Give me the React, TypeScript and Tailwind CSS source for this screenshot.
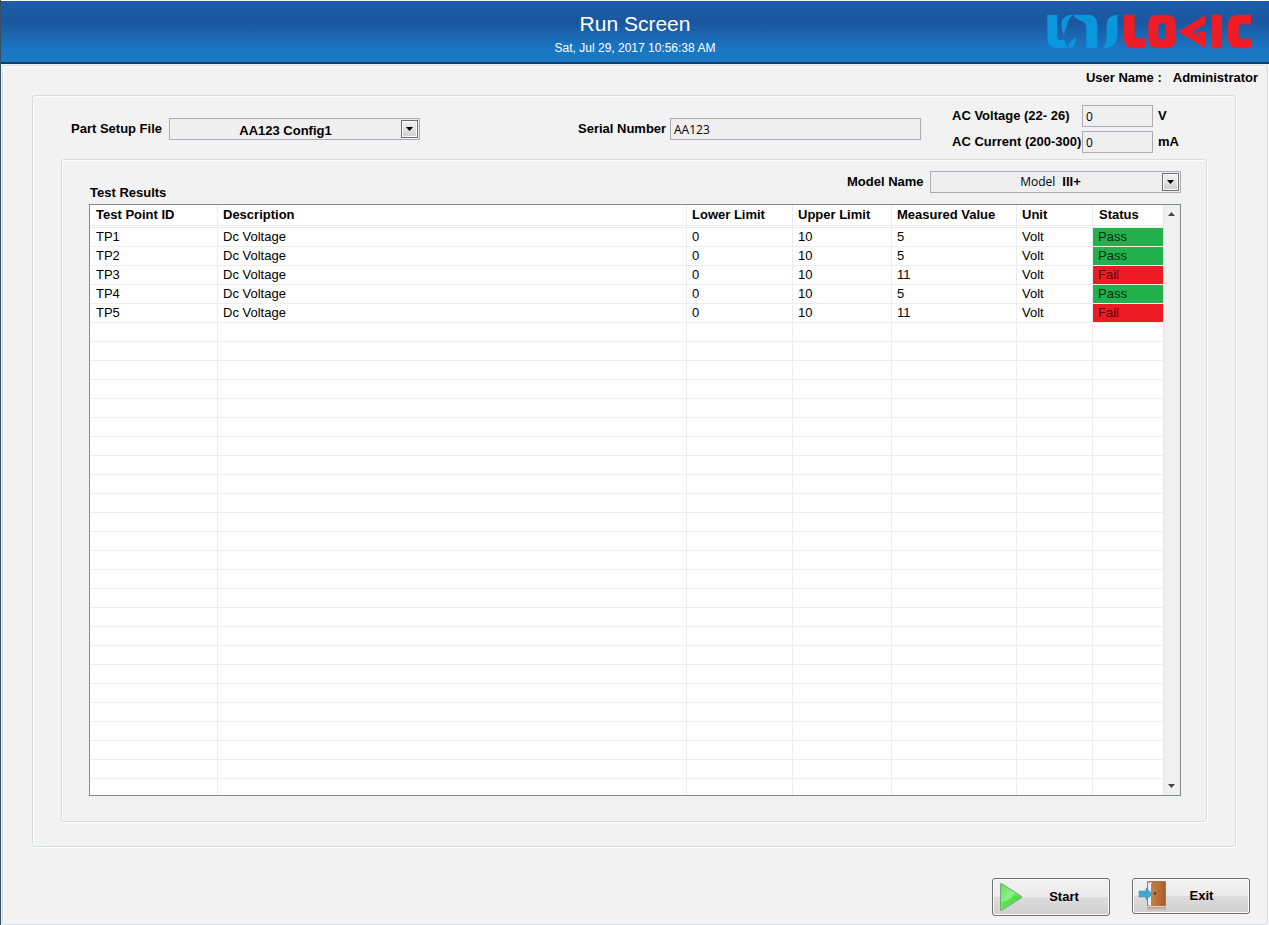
import { useState } from 'react'
import type { ReactNode } from 'react'

type TestResult = {
  id: string
  description: string
  lower: string
  upper: string
  measured: string
  unit: string
  status: 'Pass' | 'Fail'
}

const results: TestResult[] = [
  { id: 'TP1', description: 'Dc Voltage', lower: '0', upper: '10', measured: '5', unit: 'Volt', status: 'Pass' },
  { id: 'TP2', description: 'Dc Voltage', lower: '0', upper: '10', measured: '5', unit: 'Volt', status: 'Pass' },
  { id: 'TP3', description: 'Dc Voltage', lower: '0', upper: '10', measured: '11', unit: 'Volt', status: 'Fail' },
  { id: 'TP4', description: 'Dc Voltage', lower: '0', upper: '10', measured: '5', unit: 'Volt', status: 'Pass' },
  { id: 'TP5', description: 'Dc Voltage', lower: '0', upper: '10', measured: '11', unit: 'Volt', status: 'Fail' },
]

const columns = [
  { title: 'Test Point ID', width: 'w-[128px]' },
  { title: 'Description', width: '' },
  { title: 'Lower Limit', width: 'w-[106px]' },
  { title: 'Upper Limit', width: 'w-[99px]' },
  { title: 'Measured Value', width: 'w-[125px]' },
  { title: 'Unit', width: 'w-[76px]' },
  { title: 'Status', width: 'w-[70px]' },
]

const ROW_COUNT = 30

const etched = 'rounded-[3px] border border-[#d3dee3] shadow-[inset_1px_1px_0_#fff,1px_1px_0_#fff]'
const field = 'h-[22px] border border-[#abadb3] bg-[#efefef]'
const fieldText = "px-[3px] font-['Open_Sans',sans-serif] text-xs"

const Logo = () => (
  <svg viewBox="0 0 618 105" className="h-[35px] w-[206px]" role="img" aria-label="Unilogic">
    <g fill="#0a96dc" transform="translate(-18 -20)">
      <path d="M22 22H52V88Q52 98 62 98H74Q76 114 84 123H52Q22 123 22 94Z" />
      <path d="M66 38Q76 22 98 23Q84 36 82 52Q76 66 72 84Q60 60 66 38Z" />
      <path d="M82 118Q88 102 108 90Q108 110 98 119Q90 124 82 118Z" />
      <path d="M100 22H142Q172 22 172 55V123H139V64Q138 42 122 40Q108 36 100 22Z" />
      <path d="M232 22Q200 24 200 54V84Q200 112 188 123Q232 122 232 82Z" />
    </g>
    <g fill="#ee1c25" transform="translate(-18 -20)">
      <path d="M252 22H284V84Q284 93 294 93H317V123H284Q252 123 252 92Z" />
    </g>
    <g fill="#ee1c25" transform="translate(297 -20)">
      <path
        fillRule="evenodd"
        d="M38 22H64Q92 22 92 50V95Q92 123 64 123H38Q10 123 10 95V50Q10 22 38 22ZM50 48Q40 48 40 58V87Q40 97 50 97H52Q62 97 62 87V58Q62 48 52 48Z"
      />
      <path d="M100 73L181 22V51L142 73L163 87V80H155V73H181V123Z" />
      <path d="M200 22H231V123H200Z" />
      <path d="M318 22H280Q249 22 249 55V90Q249 123 280 123H318V94H292Q281 94 281 84V62Q281 51 292 51H318Z" />
    </g>
  </svg>
)

const PlayIcon = () => (
  <svg viewBox="0 0 24 30" className="h-[30px] w-[24px]" aria-hidden="true">
    <defs>
      <linearGradient id="play" x1="0" y1="0" x2="1" y2="1">
        <stop offset="0" stopColor="#5fe065" />
        <stop offset="0.45" stopColor="#8df286" />
        <stop offset="1" stopColor="#3cc93a" />
      </linearGradient>
    </defs>
    <path d="M1.5 2Q1.5 0.800 2.700 1.600L22 14Q23 15 22 16L2.700 28.400Q1.500 29 1.500 28Z" fill="url(#play)" stroke="#78a878" strokeWidth="1" />
    <path d="M2 20Q10 19 16 12L22 15L3 27.500Z" fill="#3fdc35" opacity="0.6" />
  </svg>
)

const DoorIcon = () => (
  <svg viewBox="0 0 28 32" className="h-[32px] w-[28px]" aria-hidden="true">
    <defs>
      <linearGradient id="door" x1="0" y1="0" x2="1" y2="0">
        <stop offset="0" stopColor="#c98048" />
        <stop offset="1" stopColor="#a85f2c" />
      </linearGradient>
      <linearGradient id="mirror" x1="0" y1="0" x2="0" y2="1">
        <stop offset="0" stopColor="#b0673a" stopOpacity="0.5" />
        <stop offset="1" stopColor="#b0673a" stopOpacity="0" />
      </linearGradient>
    </defs>
    <path d="M9 2Q9 1 10 1H27Q28 1 28 2V26H9Z" fill="#b5713f" />
    <path d="M10 2.500H14V25.500H10Z" fill="#e4eef4" />
    <path d="M13 3.500L27 2V26L13 25.500Z" fill="url(#door)" />
    <circle cx="17" cy="13.500" r="1.200" fill="#6b3512" />
    <path d="M9 27H28V31H9Z" fill="url(#mirror)" />
    <path d="M1 11H8V8L14.500 14L8 20V17H1Z" fill="#45a5d3" stroke="#3590bd" strokeWidth="0.500" />
  </svg>
)

const ScrollArrow = ({ down }: { down?: boolean }) => (
  <svg viewBox="0 0 7 4" className="h-[4px] w-[7px]" aria-hidden="true">
    <path d={down ? 'M0 0H7L3.500 4Z' : 'M0 4H7L3.500 0Z'} fill="#444" />
  </svg>
)

type DropdownProps = {
  id: string
  option: string
  selectClass: string
  children?: ReactNode
}

const Dropdown = ({ id, option, selectClass, children }: DropdownProps) => (
  <div className="relative w-[251px]">
    <select id={id} className={`${field} block w-full appearance-none pt-[2px] pr-[18px] text-center ${selectClass}`}>
      <option>{option}</option>
    </select>
    {children}
    <span className="pointer-events-none absolute top-[2px] right-[2px] flex h-[18px] w-[17px] items-center justify-center border border-[#707070] bg-linear-to-b from-[#f2f2f2] to-[#cfcfcf] shadow-[inset_0_0_0_1px_#fafafa]">
      <svg viewBox="0 0 7 4" className="h-[4px] w-[7px]" aria-hidden="true">
        <path d="M0 0H7L3.500 4Z" fill="#000" />
      </svg>
    </span>
  </div>
)

const ActionButton = ({ className, icon, children }: { className: string; icon: ReactNode; children: ReactNode }) => (
  <button
    className={`flex w-[118px] items-center rounded-[3px] border border-[#707070] bg-[linear-gradient(#f2f2f2,#ebebeb_50%,#dddddd_50%,#cfcfcf)] shadow-[inset_0_0_0_1px_#fafafa] ${className}`}
  >
    {icon}
    <span className="flex-1 text-center font-bold">{children}</span>
  </button>
)

const ResultsTable = () => (
  <div className="flex border border-[#828790] bg-white">
    <table className="flex-1 table-fixed border-separate border-spacing-0 text-left">
      <thead>
        <tr>
          {columns.map(({ title, width }) => (
            <th
              key={title}
              className={`h-[23px] border-r border-b-3 border-r-[#ededed] border-b-[#ededed] p-0 pl-[5px] leading-[18px] font-bold [border-bottom-style:double] first:pl-[6px] last:border-r-0 last:pl-[6px] ${width}`}
            >
              {title}
            </th>
          ))}
        </tr>
      </thead>
      <tbody>
        {Array.from({ length: ROW_COUNT }, (_, i) => {
          const row = results[i]
          const cells = row
            ? [row.id, row.description, row.lower, row.upper, row.measured, row.unit, row.status]
            : columns.map(() => '')
          const last = i === ROW_COUNT - 1
          return (
            <tr key={i}>
              {cells.map((cell, j) => (
                <td
                  key={j}
                  className={`border-[#ededed] p-0 pl-[5px] leading-[18px] first:pl-[6px] last:border-r-0 ${
                    last ? 'h-[16px] border-r' : 'h-[19px] border-r border-b'
                  } ${cell === 'Pass' ? 'bg-[#22b14c] text-[#002a10]' : ''} ${cell === 'Fail' ? 'bg-[#ed1c24] text-[#4a0010]' : ''}`}
                >
                  {cell}
                </td>
              ))}
            </tr>
          )
        })}
      </tbody>
    </table>
    <div className="flex w-[17px] flex-col items-center justify-between border-l border-[#e6e6e6] bg-[#f0f0f0] py-[7px] pr-[2px]">
      <ScrollArrow />
      <ScrollArrow down />
    </div>
  </div>
)

const App = () => {
  const [serial, setSerial] = useState('AA123')

  return (
    <div className="flex min-h-screen flex-col border-l border-[#35505f] bg-[#f2f2f2] font-['Liberation_Sans',Arial,sans-serif] text-[13px] text-black">
      <header className="grid h-[64px] grid-cols-[1fr_auto_1fr] items-center border-t border-b-2 border-t-white border-b-[#0c3c6b] bg-linear-to-b from-[#1b5da8] from-0% via-[#1b57a0] via-35% to-[#1a77c4] to-80% px-[17px] text-white">
        <div className="col-start-2 pt-[6px] text-center">
          <h1 className="text-[21px] leading-[26px]">Run Screen</h1>
          <p className="text-xs leading-[22px]">Sat, Jul 29, 2017 10:56:38 AM</p>
        </div>
        <div className="flex justify-end">
          <Logo />
        </div>
      </header>

      <main className={`mx-px mt-px flex flex-1 flex-col ${etched}`}>
        <div className="flex h-[29px] gap-[11px] pr-[9px] pl-4 leading-[23px] font-bold">
          <span className="ml-auto">User Name :</span>
          <span>Administrator</span>
        </div>

        <section className={`mr-[31px] ml-[29px] pb-[24px] ${etched}`}>
          <div className="flex h-[63px] items-center pt-[9px] pr-[58px] pb-[6px] pl-[38px] font-bold">
            <label htmlFor="setup" className="w-[98px]">
              Part Setup File
            </label>
            <Dropdown id="setup" option="AA123 Config1" selectClass="font-bold" />
            <label htmlFor="serial" className="ml-auto w-[92px]">
              Serial Number
            </label>
            <input
              id="serial"
              className={`${field} ${fieldText} w-[251px] font-normal`}
              value={serial}
              onChange={(e) => setSerial(e.target.value)}
            />
            <div className="ml-[31px] grid grid-cols-[130px_71px_24px] items-center gap-y-1">
              <label htmlFor="voltage">AC Voltage (22- 26)</label>
              <input id="voltage" className={`${field} ${fieldText} font-normal`} defaultValue="0" />
              <span className="pl-[5px]">V</span>
              <label htmlFor="current">AC Current (200-300)</label>
              <input id="current" className={`${field} ${fieldText} font-normal`} defaultValue="0" />
              <span className="pl-[5px]">mA</span>
            </div>
          </div>

          <section className={`mr-[28px] ml-[28px] pr-[25px] pb-[25px] pl-[27px] ${etched}`}>
            <div className="flex h-[44px] items-end justify-between font-bold">
              <h2 className="pl-px leading-[22px]">Test Results</h2>
              <div className="mb-[11px] flex items-center">
                <label htmlFor="model" className="w-[83px]">
                  Model Name
                </label>
                <Dropdown id="model" option="Model III+" selectClass="text-transparent">
                  <span
                    className="pointer-events-none absolute inset-0 flex items-center justify-center gap-[7px] pr-[10px]"
                    aria-hidden="true"
                  >
                    <span className="font-['Open_Sans',sans-serif] text-xs font-normal">Model</span>
                    <span>III+</span>
                  </span>
                </Dropdown>
              </div>
            </div>
            <ResultsTable />
          </section>
        </section>

        <div className="mt-auto flex items-start justify-end gap-[22px] pr-[17px] pb-[8px]">
          <ActionButton className="h-[38px] pr-[4px] pl-[6px]" icon={<PlayIcon />}>
            Start
          </ActionButton>
          <ActionButton className="h-[36px] pr-[12px] pl-[5px]" icon={<DoorIcon />}>
            Exit
          </ActionButton>
        </div>
      </main>
    </div>
  )
}

export default App
